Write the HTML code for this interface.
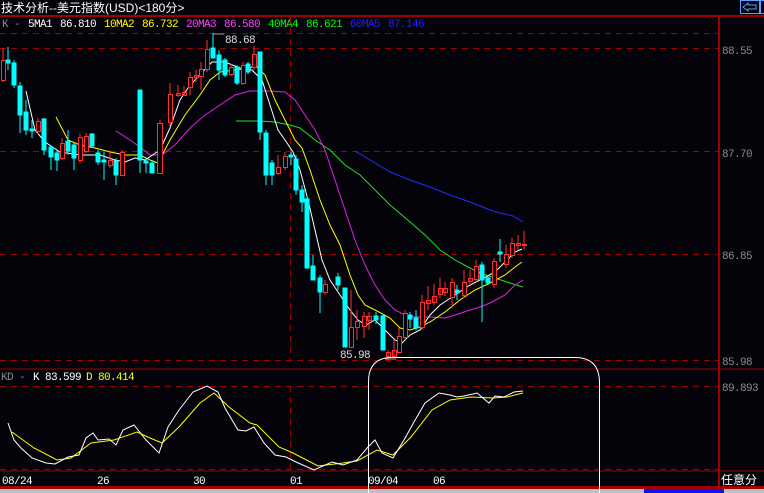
<!DOCTYPE html>
<html><head><meta charset="utf-8"><style>
html,body{margin:0;padding:0;background:#05030a;width:764px;height:493px;overflow:hidden}
svg{display:block}
text{font-family:"Liberation Mono","WenQuanYi Zen Hei",monospace;font-size:11px;letter-spacing:-0.6px}
.cj{font-family:"Liberation Sans","WenQuanYi Zen Hei",sans-serif;font-size:12px;letter-spacing:0}
</style></head><body>
<svg width="764" height="493" viewBox="0 0 764 493" xmlns="http://www.w3.org/2000/svg">
<rect width="764" height="493" fill="#05030a"/>
<text x="1" y="12" class="cj" fill="#ffffff">技术分析--美元指数(USD)&lt;180分&gt;</text>
<rect x="740.5" y="0.5" width="19" height="13" fill="none" stroke="#5aa0ff"/>
<path d="M743 7 L748 3 L748 5 L756 5 L756 9 L748 9 L748 11 Z" fill="none" stroke="#5aa0ff"/>
<rect x="760.5" y="0.5" width="6" height="13" fill="none" stroke="#5aa0ff"/>
<line x1="0" y1="16" x2="764" y2="16" stroke="#a00000" stroke-width="2"/>
<text x="2" y="27" fill="#888">K -</text>
<text x="28" y="27" fill="#fff">5MA1</text><text x="60" y="27" fill="#fff">86.810</text>
<text x="104" y="27" fill="#ffff00">10MA2</text><text x="142" y="27" fill="#ffff00">86.732</text>
<text x="186" y="27" fill="#ff40ff">20MA3</text><text x="224" y="27" fill="#ff40ff">86.580</text>
<text x="268" y="27" fill="#00ff00">40MA4</text><text x="306" y="27" fill="#00ff00">86.621</text>
<text x="350" y="27" fill="#2020ff">60MA5</text><text x="388" y="27" fill="#2020ff">87.146</text>
<g stroke="#a00000" stroke-dasharray="6,5" stroke-width="1">
<line x1="0" y1="33.5" x2="718" y2="33.5"/>
<line x1="0" y1="48.5" x2="718" y2="48.5"/>
<line x1="0" y1="151.5" x2="718" y2="151.5"/>
<line x1="0" y1="254.5" x2="718" y2="254.5"/>
<line x1="0" y1="360.5" x2="718" y2="360.5"/>
<line x1="0" y1="386.5" x2="718" y2="386.5"/>
<line x1="0" y1="469.5" x2="718" y2="469.5"/>
<line x1="290.5" y1="17" x2="290.5" y2="360"/>
<line x1="290.5" y1="386" x2="290.5" y2="470"/>
</g>
<line x1="0" y1="369" x2="764" y2="369" stroke="#a00000"/>
<line x1="0" y1="471" x2="764" y2="471" stroke="#a00000"/>
<line x1="719" y1="16" x2="719" y2="488" stroke="#a00000" stroke-width="2"/>
<g fill="#8a8a8a"><text x="722" y="54">88.55</text><text x="722" y="157">87.70</text><text x="722" y="259">86.85</text><text x="722" y="365">85.98</text><text x="722" y="391">89.893</text></g>
<text x="721" y="484" class="cj" fill="#fff">任意分</text>
<g fill="none" stroke-width="1">
<polyline stroke="#2030ff" points="355,151 370,160 390,172 410,180 430,187 450,195 470,202 490,210 500,213 513,216 523,222"/>
<polyline stroke="#20e020" points="236,121 250,121 260,121 275,122 290,125 300,128 315,140 330,150 345,165 360,175 375,190 390,205 410,222 425,235 440,250 455,260 470,268 480,273 495,278 510,283 523,287"/>
<polyline stroke="#e020e0" points="116,131 130,140 140,147 150,155 162,155 175,145 190,128 205,115 220,105 235,95 250,91 270,91 285,92 295,100 305,115 315,130 325,150 335,180 345,210 355,240 365,265 375,285 385,300 395,310 405,315 415,317 430,317 445,318 455,315 470,310 480,307 490,303 505,295 515,285 523,280"/>
<polyline stroke="#ffff00" points="56,117 68,140 80,145 95,148 110,152 125,155 140,155 150,160 158,163 170,140 185,115 200,95 210,80 220,72 235,70 250,68 255,65 265,75 275,100 285,120 295,140 302,148 310,170 320,200 330,225 340,245 350,275 358,295 365,305 375,310 390,318 400,328 410,330 420,327 430,322 445,312 460,300 475,290 490,283 505,275 515,267 522,262"/>
<polyline stroke="#ffffff" points="26,91 35,130 45,142 60,152 80,155 100,155 115,160 125,162 135,158 145,160 160,150 170,128 180,100 190,85 200,75 212,62 225,62 240,68 252,70 262,80 270,105 278,130 285,140 293,152 300,170 308,200 315,230 322,260 330,280 340,295 350,310 358,320 366,325 375,320 385,330 395,340 402,343 410,335 420,330 430,315 440,305 455,295 470,285 480,280 495,272 505,262 515,252 522,249"/>
</g>
<g stroke="#00ffff" fill="#00ffff">
<line x1="8" y1="47" x2="8" y2="70"/><rect x="6" y="60" width="4" height="3"/>
<line x1="14" y1="60" x2="14" y2="88"/><rect x="12" y="63" width="4" height="22"/>
<line x1="20" y1="82" x2="20" y2="133"/><rect x="18" y="86" width="4" height="29"/>
<line x1="26" y1="100" x2="26" y2="135"/><rect x="24" y="112" width="4" height="18"/>
<line x1="32" y1="120" x2="32" y2="138"/><rect x="30" y="129" width="4" height="2"/>
<line x1="44" y1="118" x2="44" y2="155"/><rect x="42" y="119" width="4" height="31"/>
<line x1="51" y1="145" x2="51" y2="170"/><rect x="49" y="147" width="4" height="10"/>
<line x1="57" y1="150" x2="57" y2="171"/><rect x="55" y="153" width="4" height="7"/>
<line x1="68" y1="130" x2="68" y2="155"/><rect x="66" y="141" width="4" height="10"/>
<line x1="74" y1="143" x2="74" y2="170"/><rect x="72" y="145" width="4" height="13"/>
<line x1="92" y1="133" x2="92" y2="148"/><rect x="90" y="134" width="4" height="12"/>
<line x1="98" y1="150" x2="98" y2="165"/><rect x="96" y="153" width="4" height="9"/>
<line x1="104" y1="152" x2="104" y2="180"/><rect x="102" y="160" width="4" height="2"/>
<line x1="116" y1="158" x2="116" y2="185"/><rect x="114" y="161" width="4" height="14"/>
<line x1="140" y1="90" x2="140" y2="173"/><rect x="138" y="90" width="4" height="70"/>
<line x1="146" y1="158" x2="146" y2="173"/><rect x="144" y="161" width="4" height="2"/>
<line x1="152" y1="160" x2="152" y2="173"/><rect x="150" y="163" width="4" height="10"/>
<line x1="213" y1="33" x2="213" y2="58"/><rect x="211" y="48" width="4" height="10"/>
<line x1="219" y1="50" x2="219" y2="80"/><rect x="217" y="55" width="4" height="15"/>
<line x1="225" y1="58" x2="225" y2="77"/><rect x="223" y="60" width="4" height="15"/>
<line x1="237" y1="65" x2="237" y2="85"/><rect x="235" y="67" width="4" height="16"/>
<line x1="248" y1="62" x2="248" y2="74"/><rect x="246" y="64" width="4" height="8"/>
<line x1="260" y1="52" x2="260" y2="140"/><rect x="258" y="52" width="4" height="80"/>
<line x1="266" y1="130" x2="266" y2="185"/><rect x="264" y="133" width="4" height="42"/>
<line x1="272" y1="160" x2="272" y2="185"/><rect x="270" y="163" width="4" height="12"/>
<line x1="291" y1="152" x2="291" y2="165"/><rect x="289" y="155" width="4" height="2"/>
<line x1="296" y1="155" x2="296" y2="195"/><rect x="294" y="159" width="4" height="31"/>
<line x1="302" y1="185" x2="302" y2="212"/><rect x="300" y="190" width="4" height="12"/>
<line x1="307" y1="195" x2="307" y2="268"/><rect x="305" y="199" width="4" height="69"/>
<line x1="313" y1="255" x2="313" y2="280"/><rect x="311" y="266" width="4" height="14"/>
<line x1="320" y1="275" x2="320" y2="313"/><rect x="318" y="278" width="4" height="14"/>
<line x1="338" y1="273" x2="338" y2="290"/><rect x="336" y="277" width="4" height="8"/>
<line x1="345" y1="288" x2="345" y2="347"/><rect x="343" y="288" width="4" height="59"/>
<line x1="376" y1="312" x2="376" y2="324"/><rect x="374" y="316" width="4" height="4"/>
<line x1="383" y1="314" x2="383" y2="350"/><rect x="381" y="316" width="4" height="34"/>
<line x1="410" y1="312" x2="410" y2="328"/><rect x="408" y="315" width="4" height="4"/>
<line x1="416" y1="310" x2="416" y2="330"/><rect x="414" y="318" width="4" height="10"/>
<line x1="457" y1="285" x2="457" y2="300"/><rect x="455" y="290" width="4" height="3"/>
<line x1="482" y1="262" x2="482" y2="322"/><rect x="480" y="265" width="4" height="15"/>
<line x1="488" y1="275" x2="488" y2="285"/><rect x="486" y="278" width="4" height="5"/>
<line x1="500" y1="239" x2="500" y2="262"/><rect x="498" y="252" width="4" height="2"/>
</g>
<g stroke="#ff3030" fill="none">
<line x1="3" y1="48" x2="3" y2="82"/><rect x="1.5" y="60.5" width="4" height="20" fill="#05030a"/>
<line x1="38" y1="118" x2="38" y2="134"/><rect x="36.5" y="121.5" width="4" height="10" fill="#05030a"/>
<line x1="62" y1="138" x2="62" y2="160"/><rect x="60.5" y="143.5" width="4" height="15" fill="#05030a"/>
<line x1="80" y1="134" x2="80" y2="163"/><rect x="78.5" y="137.5" width="4" height="23" fill="#05030a"/>
<line x1="86" y1="133" x2="86" y2="153"/><rect x="84.5" y="136.5" width="4" height="15" fill="#05030a"/>
<line x1="110" y1="150" x2="110" y2="168"/><rect x="108.5" y="160.5" width="4" height="5" fill="#05030a"/>
<line x1="122" y1="150" x2="122" y2="176"/><rect x="120.5" y="152.5" width="4" height="23" fill="#05030a"/>
<line x1="160" y1="120" x2="160" y2="174"/><rect x="157.5" y="123.5" width="5" height="50" fill="#05030a"/>
<line x1="170" y1="83" x2="170" y2="126"/><rect x="168.5" y="94.5" width="4" height="28" fill="#05030a"/>
<line x1="178" y1="85" x2="178" y2="97"/><rect x="176.5" y="93.5" width="4" height="2"/>
<line x1="184" y1="86" x2="184" y2="96"/><rect x="182.5" y="92.5" width="4" height="3"/>
<line x1="190" y1="72" x2="190" y2="95"/><rect x="188.5" y="77.5" width="4" height="10" fill="#05030a"/>
<line x1="196" y1="70" x2="196" y2="82"/><rect x="194.5" y="75.5" width="4" height="2"/>
<line x1="201" y1="62" x2="201" y2="90"/><rect x="199.5" y="69.5" width="4" height="7" fill="#05030a"/>
<line x1="207" y1="40" x2="207" y2="72"/><rect x="205.5" y="49.5" width="4" height="20" fill="#05030a"/>
<line x1="231" y1="64" x2="231" y2="76"/><rect x="229.5" y="67.5" width="4" height="7" fill="#05030a"/>
<line x1="243" y1="62" x2="243" y2="85"/><rect x="241.5" y="65.5" width="4" height="18" fill="#05030a"/>
<line x1="254" y1="46" x2="254" y2="70"/><rect x="252.5" y="54.5" width="4" height="13" fill="#05030a"/>
<line x1="278" y1="155" x2="278" y2="175"/><rect x="276.5" y="167.5" width="4" height="6" fill="#05030a"/>
<line x1="285" y1="152" x2="285" y2="170"/><rect x="283.5" y="156.5" width="4" height="11" fill="#05030a"/>
<line x1="325" y1="280" x2="325" y2="295"/><rect x="323.5" y="284.5" width="4" height="8" fill="#05030a"/>
<line x1="351" y1="290" x2="351" y2="348"/><rect x="349.5" y="327.5" width="4" height="20" fill="#05030a"/>
<line x1="357" y1="310" x2="357" y2="340"/><rect x="355.5" y="321.5" width="4" height="6" fill="#05030a"/>
<line x1="364" y1="312" x2="364" y2="338"/><rect x="362.5" y="316.5" width="4" height="10" fill="#05030a"/>
<line x1="369" y1="312" x2="369" y2="330"/><rect x="367.5" y="316.5" width="4" height="4"/>
<line x1="388" y1="350" x2="388" y2="360"/><rect x="386.5" y="352.5" width="4" height="4"/>
<line x1="394" y1="340" x2="394" y2="358"/><rect x="392.5" y="350.5" width="4" height="6"/>
<line x1="399" y1="328" x2="399" y2="354"/><rect x="397.5" y="336.5" width="4" height="16" fill="#05030a"/>
<line x1="405" y1="310" x2="405" y2="340"/><rect x="403.5" y="313.5" width="4" height="24" fill="#05030a"/>
<line x1="422" y1="295" x2="422" y2="330"/><rect x="420.5" y="302.5" width="4" height="25" fill="#05030a"/>
<line x1="428" y1="286" x2="428" y2="310"/><rect x="426.5" y="300.5" width="4" height="3"/>
<line x1="434" y1="284" x2="434" y2="305"/><rect x="432.5" y="296.5" width="4" height="6"/>
<line x1="440" y1="278" x2="440" y2="298"/><rect x="438.5" y="288.5" width="4" height="6"/>
<line x1="445" y1="282" x2="445" y2="296"/><rect x="443.5" y="288.5" width="4" height="4"/>
<line x1="452" y1="278" x2="452" y2="308"/><rect x="450.5" y="282.5" width="4" height="15" fill="#05030a"/>
<line x1="464" y1="270" x2="464" y2="298"/><rect x="462.5" y="282.5" width="4" height="13" fill="#05030a"/>
<line x1="470" y1="270" x2="470" y2="285"/><rect x="468.5" y="278.5" width="4" height="3"/>
<line x1="476" y1="260" x2="476" y2="282"/><rect x="474.5" y="266.5" width="4" height="13" fill="#05030a"/>
<line x1="494" y1="258" x2="494" y2="288"/><rect x="492.5" y="261.5" width="4" height="23" fill="#05030a"/>
<line x1="506" y1="245" x2="506" y2="268"/><rect x="504.5" y="254.5" width="4" height="10" fill="#05030a"/>
<line x1="512" y1="238" x2="512" y2="258"/><rect x="510.5" y="243.5" width="4" height="12" fill="#05030a"/>
<line x1="518" y1="235" x2="518" y2="250"/><rect x="516.5" y="243.5" width="4" height="2"/>
<line x1="524" y1="231" x2="524" y2="250"/><rect x="522.5" y="244.5" width="4" height="1"/>
</g>
<line x1="213" y1="34" x2="224" y2="34" stroke="#999"/><text x="225" y="43" fill="#ddd">88.68</text>
<line x1="385" y1="359" x2="396" y2="359" stroke="#999"/><text x="340" y="358" fill="#ddd">85.98</text>
<text x="1" y="380" fill="#888">KD -</text><text x="33" y="380" fill="#fff">K 83.599</text><text x="86" y="380" fill="#ffff00">D 80.414</text>
<polyline fill="none" stroke="#ffff00" points="12,432 34,448 57,460 71,458 91,443 114,440 137,432 150,438 162,443 179,427 200,403 214,393 229,407 250,423 257,425 279,447 293,453 318,466 343,463 357,461 377,450 393,455 411,437 432,410 450,400 471,397 493,398 507,397 523,393"/>
<polyline fill="none" stroke="#ffffff" points="8,423 14,440 21,448 32,458 46,463 55,464 68,457 79,455 86,438 93,433 98,440 109,439 116,445 123,430 134,425 146,440 159,453 168,427 179,410 193,392 207,386 218,392 225,408 238,430 246,431 254,427 264,443 275,455 286,457 296,462 314,470 332,462 343,465 357,460 368,447 375,440 382,453 393,458 404,440 414,422 425,403 439,393 450,395 457,397 464,396 477,393 489,403 495,396 504,397 514,392 523,391"/>
<g fill="#fff"><text x="2" y="484">08/24</text><text x="97" y="484">26</text><text x="193" y="484">30</text><text x="290" y="484">01</text><text x="368" y="484">09/04</text><text x="433" y="484">06</text></g>
<rect x="0" y="486" width="764" height="3" fill="#a00000"/>
<rect x="0" y="489" width="764" height="4" fill="#c0c0c0"/>
<rect x="644" y="489" width="80" height="4" fill="#1010ff"/>
<path d="M368.5 493 L368.5 382 Q368.5 357.5 392 357.5 L575 357.5 Q599.5 357.5 599.5 383 L599.5 493" fill="none" stroke="#fff"/>
</svg>
</body></html>
